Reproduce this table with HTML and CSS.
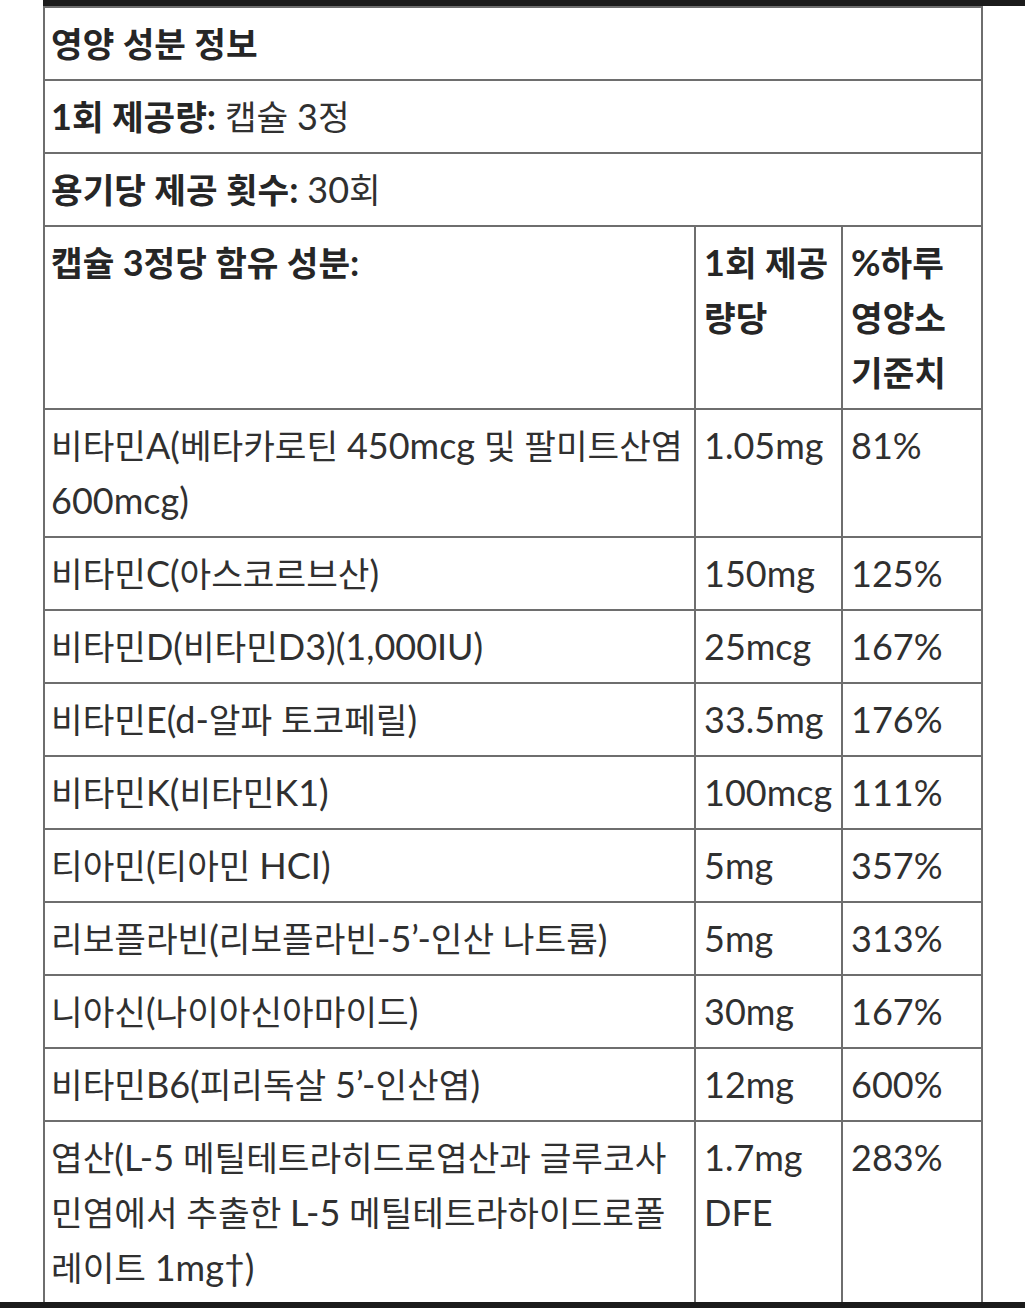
FILE: index.html
```html
<!DOCTYPE html>
<html lang="ko">
<head>
<meta charset="utf-8">
<title>영양 성분 정보</title>
<link rel="stylesheet" href="styles.css">
</head>
<body>
<div class="topbar"></div>
<table class="facts">
  <colgroup>
    <col class="c1">
    <col class="c2">
    <col class="c3">
  </colgroup>
  <tbody>
    <tr><th colspan="3" class="name">영양 성분 정보</th></tr>
    <tr><td colspan="3" class="name"><b><span class="l">1</span>회 제공량<span class="l">:</span></b> 캡슐 <span class="l">3</span>정</td></tr>
    <tr><td colspan="3" class="name"><b>용기당 제공 횟수<span class="l">:</span></b> <span class="l">30</span>회</td></tr>
    <tr>
      <th class="name">캡슐 <span class="l">3</span>정당 함유 성분<span class="l">:</span></th>
      <th><span class="l">1</span>회 제공량당</th>
      <th><span class="l">%</span>하루 영양소 기준치</th>
    </tr>
    <tr>
      <td class="name">비타민<span class="l">A(</span>베타카로틴 <span class="l">450mcg</span> 및 팔미트산염 <span class="l">600mcg)</span></td>
      <td><span class="l">1.05mg</span></td>
      <td><span class="l">81%</span></td>
    </tr>
    <tr>
      <td class="name">비타민<span class="l">C(</span>아스코르브산<span class="l">)</span></td>
      <td><span class="l">150mg</span></td>
      <td><span class="l">125%</span></td>
    </tr>
    <tr>
      <td class="name">비타민<span class="l">D(</span>비타민<span class="l">D3)(1,000IU)</span></td>
      <td><span class="l">25mcg</span></td>
      <td><span class="l">167%</span></td>
    </tr>
    <tr>
      <td class="name">비타민<span class="l">E(d-</span>알파 토코페릴<span class="l">)</span></td>
      <td><span class="l">33.5mg</span></td>
      <td><span class="l">176%</span></td>
    </tr>
    <tr>
      <td class="name">비타민<span class="l">K(</span>비타민<span class="l">K1)</span></td>
      <td><span class="l">100mcg</span></td>
      <td><span class="l">111%</span></td>
    </tr>
    <tr>
      <td class="name">티아민<span class="l">(</span>티아민 <span class="l">HCI)</span></td>
      <td><span class="l">5mg</span></td>
      <td><span class="l">357%</span></td>
    </tr>
    <tr>
      <td class="name">리보플라빈<span class="l">(</span>리보플라빈<span class="l">-5’-</span>인산 나트륨<span class="l">)</span></td>
      <td><span class="l">5mg</span></td>
      <td><span class="l">313%</span></td>
    </tr>
    <tr>
      <td class="name">니아신<span class="l">(</span>나이아신아마이드<span class="l">)</span></td>
      <td><span class="l">30mg</span></td>
      <td><span class="l">167%</span></td>
    </tr>
    <tr>
      <td class="name">비타민<span class="l">B6(</span>피리독살 <span class="l">5’-</span>인산염<span class="l">)</span></td>
      <td><span class="l">12mg</span></td>
      <td><span class="l">600%</span></td>
    </tr>
    <tr>
      <td class="name">엽산<span class="l">(L-5</span> 메틸테트라히드로엽산과 글루코사민염에서 추출한 <span class="l">L-5</span> 메틸테트라하이드로폴레이트 <span class="l">1mg†)</span></td>
      <td><span class="l">1.7mg DFE</span></td>
      <td><span class="l">283%</span></td>
    </tr>
  </tbody>
</table>
<div class="bottombar"></div>
</body>
</html>
```
FILE: styles.css
```css
* { box-sizing: border-box; }
html, body { margin: 0; padding: 0; background: #fff; }
body { height: 1308px; overflow: hidden; position: relative; }

.topbar {
  margin-left: 43px;
  height: 6px;
  background: #1b1b1b;
}

.facts {
  margin-left: 43px;
  width: 940px;
  border-collapse: collapse;
  table-layout: fixed;
  font-family: Lato, "Noto Sans CJK KR", sans-serif;
  font-size: 34.4px;
  line-height: 55px;
  color: #303030;
}

.c1 { width: 651px; }
.c2 { width: 147px; }

.facts th,
.facts td {
  border: 2px solid #6e6e6e;
  padding: 8px;
  vertical-align: top;
  text-align: left;
  font-weight: 400;
}

.facts .name { padding-left: 6px; padding-right: 6px; }

.facts th,
.facts b {
  font-weight: 700;
  color: #262626;
}

.l { font-size: 36px; line-height: 40px; }

.bottombar {
  position: absolute;
  left: 0;
  right: 0;
  bottom: 0;
  height: 6px;
  background: #1b1b1b;
}
```
